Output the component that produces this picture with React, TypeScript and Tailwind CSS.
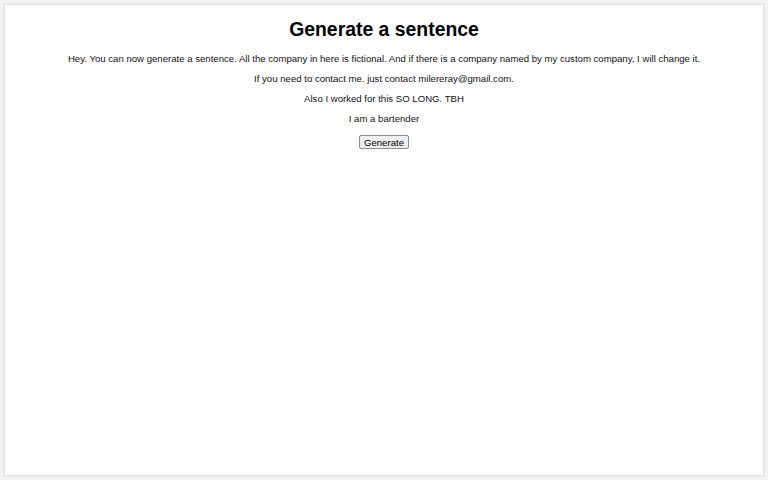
export default function App() {
    return (
        <div className="h-[480px] w-[768px] bg-[#f3f3f3] p-[4px] font-['Liberation_Sans',Arial,sans-serif] text-black">
            <div className="flex h-full flex-col items-center border border-[#e2e2e2] bg-white pt-[13px] text-center shadow-[0_0_2px_rgba(0,0,0,0.08)]">

                <h1 className="text-[19.4px] font-bold leading-[22px]">
                    Generate a sentence
                </h1>

                <div className="mt-[12.5px] flex flex-col items-center gap-[9.3px] text-[9.6px] leading-[11px] text-[#111]">
                    <p>
                        Hey. You can now generate a sentence. All the company in here is fictional. And if there is a company named by my custom company, I will change it.
                    </p>
                    <p>If you need to contact me. just contact milereray@gmail.com.</p>
                    <p>Also I worked for this SO LONG. TBH</p>
                    <p>I am a bartender</p>
                </div>

                <button className="mt-[11px] h-[14px] rounded-[2px] border border-[#8f8f8f] bg-[#efefef] px-[4px] text-[9.6px] leading-[11px] text-black">
                    Generate
                </button>

            </div>
        </div>
    )
}
